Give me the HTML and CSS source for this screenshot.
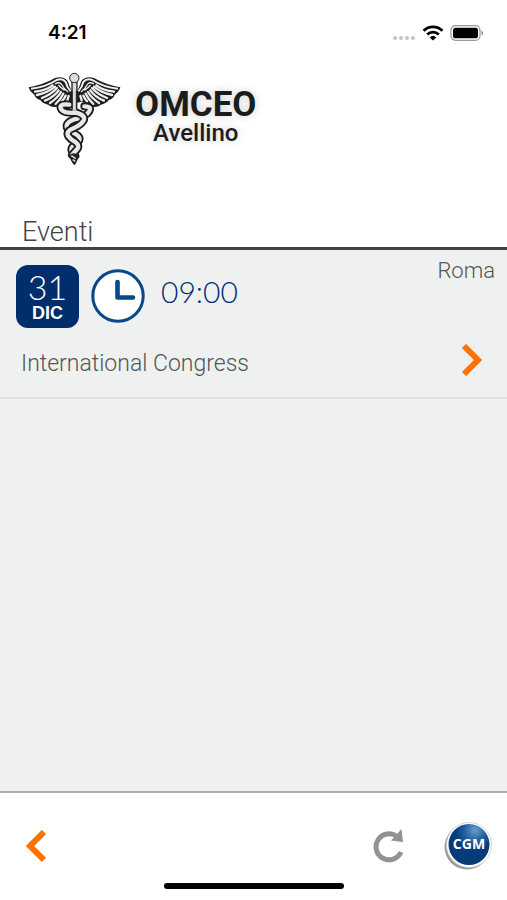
FILE: index.html
```html
<!DOCTYPE html>
<html lang="it">
<head>
<meta charset="utf-8">
<meta name="viewport" content="width=device-width, initial-scale=1">
<title>OMCEO Avellino</title>
<link rel="stylesheet" href="styles.css">
</head>
<body>
<div class="status">
  <time class="status-time">4:21</time>
  <div class="status-icons">
    <svg width="24" height="6" viewBox="0 0 24 6" fill="#c4c4c4" aria-hidden="true"><circle cx="3" cy="3" r="2"/><circle cx="9" cy="3" r="2"/><circle cx="15" cy="3" r="2"/><circle cx="21" cy="3" r="2"/></svg>
    <svg width="22" height="16" viewBox="0 0 22 16" fill="none" stroke="#000" stroke-width="2.8" aria-hidden="true"><path d="M1.6 5.8a13.4 13.4 0 0 1 18.8 0M5.2 9.5a8.3 8.3 0 0 1 11.6 0"/><path d="M11 15.6 7.7 12.4a4.8 4.8 0 0 1 6.6 0Z" fill="#000" stroke="none"/></svg>
    <svg width="34" height="16" viewBox="0 0 34 16" aria-hidden="true"><rect x="1" y=".7" width="29" height="14.6" rx="4.5" fill="#fff" stroke="#999" stroke-width="1.2"/><rect x="3" y="2.7" width="25" height="10.6" rx="2.6"/><path d="M31.5 5.5c2 .8 2 4.2 0 5Z" fill="#888"/></svg>
  </div>
</div>
<header class="brand">
  <svg class="caduceus" width="110" height="115" viewBox="0 0 330 345" aria-hidden="true">
    <defs>
      <g id="wing">
        <path d="M26 82Q70 74 105 54Q130 47 143 63Q149 82 157 95L156 128Q133 121 119 139Q96 145 84 134Q66 130 61 120Q46 115 43 104Q30 96 26 82Z" fill="#1c1c1c"/>
        <path d="M33 86Q76 82 110 60Q127 54 137 66Q141 82 152 94" fill="none" stroke="#f0f0f0" stroke-width="6"/>
        <g fill="none" stroke="#eee" stroke-width="7" stroke-linecap="round">
          <path d="M45 95Q78 91 98 76M51 105Q82 99 105 80M66 114Q94 103 111 84M75 122Q102 111 116 91M90 129Q113 114 123 96M107 132Q122 118 130 101M126 124Q133 116 137 107M142 121L146 108"/>
        </g>
        <path d="M105 72Q119 63 126 75Q132 87 144 96M115 75Q123 84 134 91" fill="none" stroke="#eee" stroke-width="4"/>
      </g>
    </defs>
    <use href="#wing"/>
    <use href="#wing" transform="translate(327 0) scale(-1 1)"/>
    <path d="M156 62h15l-2 220-5 31-7-31Z" fill="#ddd" stroke="#222" stroke-width="4"/>
    <circle cx="163" cy="54" r="14" fill="#ddd" stroke="#222" stroke-width="3"/>
    <g fill="none" stroke-linecap="round">
      <path d="M193 139Q222 139 202 161Q186 173 160 179Q132 190 143 207Q154 218 168 223Q184 231 176 244Q167 253 157 261Q150 270 160 279L166 288" stroke="#1c1c1c" stroke-width="24"/>
      <path d="M193 139Q222 139 202 161Q186 173 160 179Q132 190 143 207Q154 218 168 223Q184 231 176 244Q167 253 157 261Q150 270 160 279L166 288" stroke="#e8e8e8" stroke-width="13"/>
      <path d="M148 134Q112 130 125 150Q136 161 169 158Q200 167 190 183Q181 196 160 205Q136 214 145 229Q152 239 166 246Q180 257 172 267Q162 278 156 285" stroke="#1c1c1c" stroke-width="24"/>
      <path d="M148 134Q112 130 125 150Q136 161 169 158Q200 167 190 183Q181 196 160 205Q136 214 145 229Q152 239 166 246Q180 257 172 267Q162 278 156 285" stroke="#e8e8e8" stroke-width="13"/>
    </g>
    <path d="M157 92h12v60h-12Z" fill="#ddd"/><path d="M157 92v57M169 92v57" stroke="#222" stroke-width="3"/>
    <path d="M149 284q12-9 25 0q2 18-11 31q-14-14-14-31Z" fill="#222"/>
    <path d="M154 287l13 9M158 299l8 5" stroke="#ddd" stroke-width="4"/>
  </svg>
  <div class="brand-name"><strong>OMCEO</strong><span>Avellino</span></div>
</header>
<h1 class="title">Eventi</h1>
<main class="events">
  <article class="event">
    <div class="event-top">
      <div class="date"><span class="day">31</span><span class="month">DIC</span></div>
      <svg class="clock" width="54" height="54" viewBox="0 0 54 54" aria-hidden="true"><circle cx="27" cy="27" r="25.2" fill="#fff" stroke="#07488a" stroke-width="3"/><path d="M26.5 13v15.500H42" fill="none" stroke="#07488a" stroke-width="4.600" stroke-linecap="round" stroke-linejoin="round"/></svg>
      <time class="hour">09:00</time>
      <span class="place">Roma</span>
    </div>
    <div class="event-bottom">
      <h2 class="event-name">International Congress</h2>
      <a class="arrow" href="#" aria-label="Apri evento"><svg width="22" height="32" viewBox="0 0 22 32" fill="none" stroke="#ff7200" stroke-width="6"><path d="M3 2 17 16 3 30"/></svg></a>
    </div>
  </article>
</main>
<footer class="toolbar">
  <button class="tool back" aria-label="Indietro"><svg width="22" height="32" viewBox="0 0 22 32" fill="none" stroke="#ff7200" stroke-width="6"><path d="M20 2 6 16 20 30"/></svg></button>
  <button class="tool" aria-label="Aggiorna"><svg width="32" height="34" viewBox="0 0 32 34"><path d="M24 7.500A13 13 0 1 0 28 23" fill="none" stroke="#929292" stroke-width="5"/><path d="M28.500 0 30 13 18 11.500Z" fill="#929292"/></svg></button>
  <button class="tool" aria-label="CGM"><svg width="48" height="48" viewBox="0 0 48 48">
    <defs><radialGradient id="ball" cx=".65" cy=".15" r=".75"><stop offset="0" stop-color="#679bd0"/><stop offset=".35" stop-color="#23609f"/><stop offset=".65" stop-color="#043d7d"/><stop offset="1" stop-color="#073a77"/></radialGradient></defs>
    <circle cx="23" cy="25" r="22.5" fill="#999"/><circle cx="25" cy="23" r="22.5" fill="#fff" stroke="#ccc" stroke-width=".8"/><circle cx="25" cy="22.5" r="20.5" fill="url(#ball)"/><text x="25" y="27" text-anchor="middle" class="cgm">CGM</text></svg></button>
</footer>
<div class="home"></div>
</body>
</html>
```
FILE: styles.css
```css
* { box-sizing: border-box; }
body {
  margin: 0;
  min-height: 100vh;
  display: flex;
  flex-direction: column;
  background: #fff;
  color: #555;
  font-family: Roboto, "Liberation Sans", sans-serif;
}
.status {
  display: flex;
  justify-content: space-between;
  align-items: center;
  height: 66px;
  padding: 0 23px 0 48px;
}
.status-time {
  color: #000;
  font: 600 19px/24px Inter, sans-serif;
}
.status-icons { display: flex; align-items: center; gap: 6px; }
.status-icons svg:first-child { margin-top: 10px; }
.brand {
  display: flex;
  align-items: flex-start;
  gap: 5px;
  padding: 0 20px;
  height: 144px;
}
.caduceus { margin-top: -6px; }
.brand-name {
  display: flex;
  flex-direction: column;
  align-items: center;
  margin-top: 23px;
  color: #1c1c1c;
  text-shadow: 0 0 8px #ccc;
}
.brand-name strong { font: 700 35px/32px Roboto, sans-serif; }
.brand-name span { font: 500 24px/24px Roboto, sans-serif; }
.title {
  margin: 0;
  padding: 6px 22px 0;
  height: 40px;
  border-bottom: 3px solid #424242;
  color: #444;
  font-size: 27px;
  font-weight: 300;
  line-height: 32px;
}
.events { flex: 1; background: #eef1f0; }
.event { height: 149px; border-bottom: 2px solid #e0e3e2; }
.event-top {
  display: flex;
  align-items: flex-start;
  padding: 15px 12px 0 16px;
}
.date {
  display: flex;
  flex-direction: column;
  align-items: center;
  width: 63px;
  height: 63px;
  padding-top: 4px;
  border-radius: 12px;
  background: #002d6c;
  color: #fff;
}
.day { font: 300 34px/36px Lato, sans-serif; }
.month { font: 700 18px/16px "Liberation Sans", sans-serif; }
.clock { margin: 4px 0 0 12px; }
.hour {
  margin: 7px 0 0 16px;
  color: #002d77;
  font: 300 30px/38px Lato, sans-serif;
}
.place {
  margin: -8px 0 0 auto;
  font-size: 22px;
  font-weight: 300;
  line-height: 28px;
}
.event-bottom {
  display: flex;
  justify-content: space-between;
  align-items: center;
  padding: 14px 24px 0 21px;
}
.event-name { margin: 8px 0 0; font-size: 23px; font-weight: 300; line-height: 28px; }
.tool svg, .arrow svg { display: block; }
.toolbar {
  display: flex;
  align-items: center;
  gap: 39px;
  height: 92px;
  padding: 16px 15px 0 24px;
  border-top: 2px solid #aeb0b0;
}
.toolbar .back { margin-right: auto; }
.tool { padding: 0; border: 0; background: none; cursor: pointer; }
.cgm { font: 700 14px "Open Sans", sans-serif; fill: #fff; }
.home {
  width: 180px;
  height: 6px;
  margin: 0 auto 11px;
  border-radius: 3px;
  background: #000;
}
```
